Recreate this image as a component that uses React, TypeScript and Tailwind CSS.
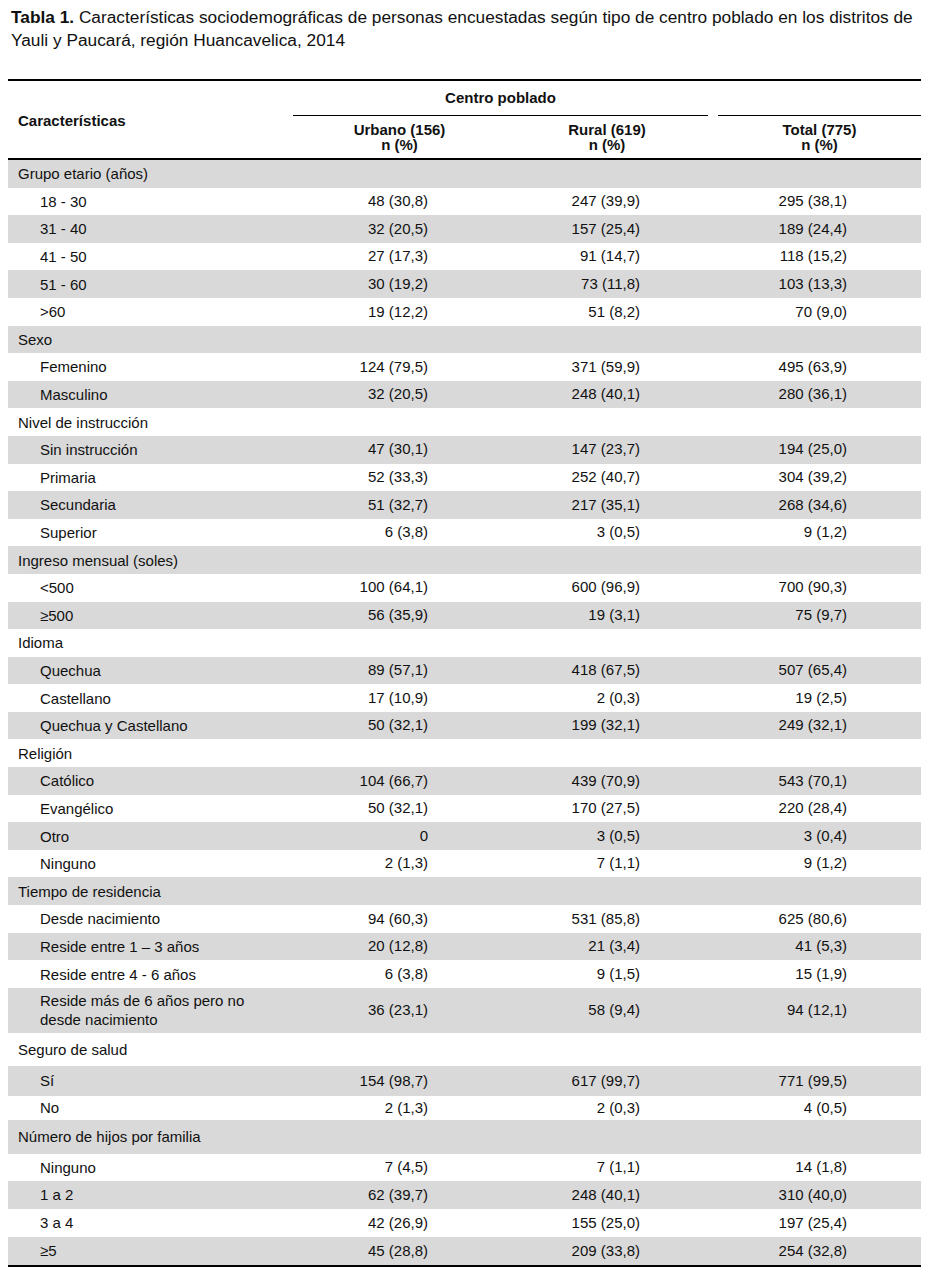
import React from "react";

type Row = {
  label: React.ReactNode;
  sub?: boolean;
  values?: [string, string, string];
};

const groups: { title: string; items: [string, string, string, string][] }[] = [
  {
    title: "Grupo etario (años)",
    items: [
      ["18 - 30", "48 (30,8)", "247 (39,9)", "295 (38,1)"],
      ["31 - 40", "32 (20,5)", "157 (25,4)", "189 (24,4)"],
      ["41 - 50", "27 (17,3)", "91 (14,7)", "118 (15,2)"],
      ["51 - 60", "30 (19,2)", "73 (11,8)", "103 (13,3)"],
      [">60", "19 (12,2)", "51 (8,2)", "70 (9,0)"],
    ],
  },
  {
    title: "Sexo",
    items: [
      ["Femenino", "124 (79,5)", "371 (59,9)", "495 (63,9)"],
      ["Masculino", "32 (20,5)", "248 (40,1)", "280 (36,1)"],
    ],
  },
  {
    title: "Nivel de instrucción",
    items: [
      ["Sin instrucción", "47 (30,1)", "147 (23,7)", "194 (25,0)"],
      ["Primaria", "52 (33,3)", "252 (40,7)", "304 (39,2)"],
      ["Secundaria", "51 (32,7)", "217 (35,1)", "268 (34,6)"],
      ["Superior", "6 (3,8)", "3 (0,5)", "9 (1,2)"],
    ],
  },
  {
    title: "Ingreso mensual (soles)",
    items: [
      ["<500", "100 (64,1)", "600 (96,9)", "700 (90,3)"],
      ["≥500", "56 (35,9)", "19 (3,1)", "75 (9,7)"],
    ],
  },
  {
    title: "Idioma",
    items: [
      ["Quechua", "89 (57,1)", "418 (67,5)", "507 (65,4)"],
      ["Castellano", "17 (10,9)", "2 (0,3)", "19 (2,5)"],
      ["Quechua y Castellano", "50 (32,1)", "199 (32,1)", "249 (32,1)"],
    ],
  },
  {
    title: "Religión",
    items: [
      ["Católico", "104 (66,7)", "439 (70,9)", "543 (70,1)"],
      ["Evangélico", "50 (32,1)", "170 (27,5)", "220 (28,4)"],
      ["Otro", "0", "3 (0,5)", "3 (0,4)"],
      ["Ninguno", "2 (1,3)", "7 (1,1)", "9 (1,2)"],
    ],
  },
  {
    title: "Tiempo de residencia",
    items: [
      ["Desde nacimiento", "94 (60,3)", "531 (85,8)", "625 (80,6)"],
      ["Reside entre 1 – 3 años", "20 (12,8)", "21 (3,4)", "41 (5,3)"],
      ["Reside entre 4 - 6 años", "6 (3,8)", "9 (1,5)", "15 (1,9)"],
      ["Reside más de 6 años pero no|desde nacimiento", "36 (23,1)", "58 (9,4)", "94 (12,1)"],
    ],
  },
  {
    title: "Seguro de salud",
    items: [
      ["Sí", "154 (98,7)", "617 (99,7)", "771 (99,5)"],
      ["No", "2 (1,3)", "2 (0,3)", "4 (0,5)"],
    ],
  },
  {
    title: "Número de hijos por familia",
    items: [
      ["Ninguno", "7 (4,5)", "7 (1,1)", "14 (1,8)"],
      ["1 a 2", "62 (39,7)", "248 (40,1)", "310 (40,0)"],
      ["3 a 4", "42 (26,9)", "155 (25,0)", "197 (25,4)"],
      ["≥5", "45 (28,8)", "209 (33,8)", "254 (32,8)"],
    ],
  },
];

// the scanned table isn't perfectly regular near the bottom
const customHeights: Record<number, number> = {
  30: 45,
  31: 33,
  32: 30,
  33: 24,
  34: 34,
  35: 27,
  36: 28,
  37: 28,
  38: 28,
};

const rows: Row[] = [];
groups.forEach((g) => {
  rows.push({ label: g.title });
  g.items.forEach(([label, a, b, c]) => {
    const parts = label.split("|");
    rows.push({
      label:
        parts.length > 1 ? (
          <>
            {parts[0]}
            <br />
            {parts[1]}
          </>
        ) : (
          label
        ),
      sub: true,
      values: [a, b, c],
    });
  });
});

const cols = "grid grid-cols-[285px_213px_202px_10px_203px]";

const App = () => {
  return (
    <div className="w-[929px] h-[1277px] bg-white text-[#111] font-['Liberation_Sans',Arial,sans-serif]">
      <p className="pl-[11px] pt-[6px] text-[17.3px] leading-[23px]">
        <b>Tabla 1.</b> Características sociodemográficas de personas encuestadas según tipo de centro poblado en los
        distritos de Yauli y Paucará, región Huancavelica, 2014
      </p>

      <div className="ml-[8px] w-[913px] mt-[27px] text-[15px]">
        {/* header */}
        <div className={`${cols} border-t-2 border-b-2 border-black font-bold`}>
          <div className="row-span-2 flex items-center pl-[10px] pt-[3px]">Características</div>
          <div className="col-span-2 h-[35px] flex items-center justify-center border-b border-black">
            Centro poblado
          </div>
          <div />
          <div className="h-[35px] border-b border-black" />
          <div className="h-[42px] flex flex-col items-center justify-center leading-[15px]">
            <span>Urbano (156)</span>
            <span>n (%)</span>
          </div>
          <div className="h-[42px] flex flex-col items-center justify-center leading-[15px]">
            <span>Rural (619)</span>
            <span>n (%)</span>
          </div>
          <div />
          <div className="h-[42px] flex flex-col items-center justify-center leading-[15px]">
            <span>Total (775)</span>
            <span>n (%)</span>
          </div>
        </div>

        {/* body */}
        <div className="border-b-2 border-black">
          {rows.map((row, i) => (
            <div
              key={i}
              className={`${cols} items-center ${i % 2 === 0 ? "bg-[#d9d9d9]" : "bg-white"}`}
              style={{ height: customHeights[i] ?? 27.6 }}
            >
              <div className={`${row.sub ? "pl-[32px]" : "pl-[10px]"} leading-[19px]`}>{row.label}</div>
              <div className="text-right pr-[78px]">{row.values?.[0]}</div>
              <div className="text-right pr-[68px]">{row.values?.[1]}</div>
              <div />
              <div className="text-right pr-[74px]">{row.values?.[2]}</div>
            </div>
          ))}
        </div>
      </div>
    </div>
  );
};

export default App;
